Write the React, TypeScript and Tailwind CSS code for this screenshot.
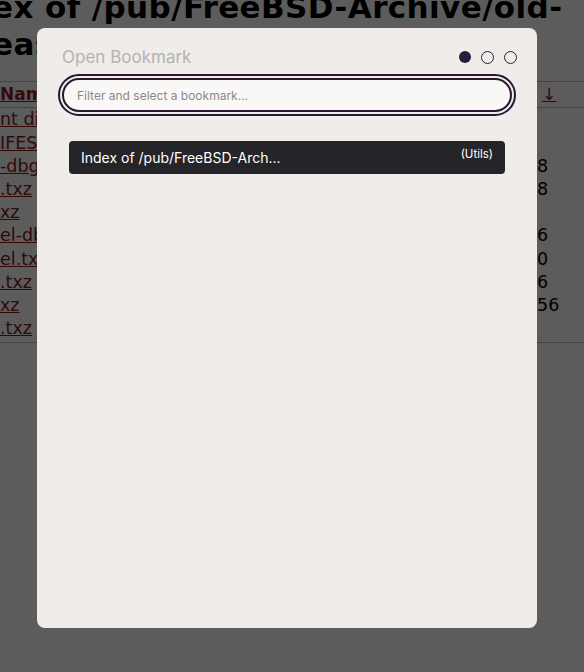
import React from 'react'

const rows = [
  { name: 'nt dir', size: '' },
  { name: 'IFEST', size: '' },
  { name: '-dbg.txz', size: '8' },
  { name: '.txz', size: '8' },
  { name: 'xz', size: '' },
  { name: 'el-dbg.txz', size: '6' },
  { name: 'el.txz', size: '0' },
  { name: '.txz', size: '6' },
  { name: 'xz', size: '56' },
  { name: '.txz', size: '' },
]

function BackgroundPage() {
  return (
    <div className="w-[584px] h-[672px] bg-white text-black overflow-hidden" style={{ fontFamily: '"DejaVu Sans", sans-serif' }}>
      <h1 className="text-[31px] font-bold leading-[37px] -mt-[11px] -ml-[8px] whitespace-nowrap tracking-[0.4px]">
        <div>ex of /pub/FreeBSD-Archive/old-</div>
        <div>eas</div>
      </h1>
      <div className="mt-[18px] border-t border-[#bbbbbb]">
        <div className="flex h-[26px] items-center border-b border-[#bbbbbb] text-[17px]">
          <span className="w-[542px] font-bold text-[#9b1b1b] underline">Name</span>
          <span className="text-[#9b1b1b] underline">↓</span>
        </div>
        {rows.map((r, i) => (
          <div key={i} className="flex h-[23.2px] items-center text-[17.5px]">
            <span className="w-[537px] text-[#8a1a1a] underline whitespace-nowrap overflow-hidden">{r.name}</span>
            <span>{r.size}</span>
          </div>
        ))}
        <div className="border-t border-[#bbbbbb] mt-[2px]" />
      </div>
    </div>
  )
}

export default function App() {
  return (
    <div className="relative w-[584px] h-[672px] overflow-hidden">
      <BackgroundPage />
      <div className="absolute inset-0 bg-black/[0.64]" />
      <div
        className="absolute left-[37px] top-[28px] w-[500px] h-[600px] rounded-[8px] bg-[#efece9] px-[21px] pt-[19px]"
        style={{ fontFamily: 'Inter, "Noto Sans", sans-serif' }}
      >
        <div className="flex items-center justify-between pl-[4px]">
          <span className="text-[17px] text-[#b6b3b1] leading-[20px]">Open Bookmark</span>
          <div className="flex items-center gap-[10px] -mr-[1px]">
            <span className="w-[12px] h-[12px] rounded-full bg-[#2a1c3a]" />
            <span className="w-[13px] h-[13px] rounded-full border-[1.5px] border-[#2a1c3a]" />
            <span className="w-[13px] h-[13px] rounded-full border-[1.5px] border-[#2a1c3a]" />
          </div>
        </div>
        <div className="mt-[7px] rounded-full border-2 border-[#2a1630] p-[2px]">
          <input
            className="w-full h-[34px] rounded-full border-2 border-[#2a1630] bg-[#faf8f7] px-[13px] text-[12px] text-[#333] placeholder:text-[#8c8887] outline-none"
            placeholder="Filter and select a bookmark..."
          />
        </div>
        <div className="mt-[25px] mx-[11px] flex h-[33px] items-center justify-between rounded-[4px] bg-[#252428] pl-[12px] pr-[12px]">
          <span className="text-[14px] text-white">Index of /pub/FreeBSD-Arch...</span>
          <span className="text-[11.5px] text-white -mt-[5px]">(Utils)</span>
        </div>
      </div>
    </div>
  )
}
